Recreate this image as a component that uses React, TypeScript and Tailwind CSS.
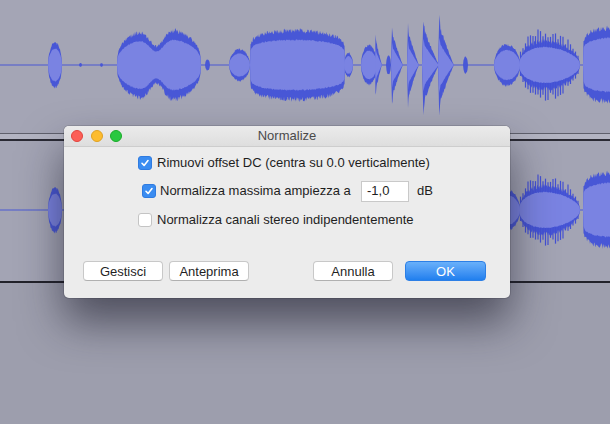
import React from "react";

type Kind = "blob" | "twin" | "rect" | "spike" | "spiky";

type Seg = {
  x0: number;
  x1: number;
  amp: number;
  kind: Kind;
};

// one channel; the second track repeats it (stereo)
const segments: Seg[] = [
  { x0: 79, x1: 82, amp: 2, kind: "blob" },
  { x0: 100, x1: 103, amp: 2, kind: "blob" },
  { x0: 48, x1: 62, amp: 24, kind: "blob" },
  { x0: 117, x1: 201, amp: 40, kind: "twin" },
  { x0: 205, x1: 210, amp: 6, kind: "blob" },
  { x0: 229, x1: 250, amp: 17, kind: "blob" },
  { x0: 250, x1: 345, amp: 38, kind: "rect" },
  { x0: 344, x1: 353, amp: 13, kind: "blob" },
  { x0: 361, x1: 377, amp: 21, kind: "blob" },
  { x0: 375, x1: 382, amp: 36, kind: "spike" },
  { x0: 386, x1: 391, amp: 10, kind: "blob" },
  { x0: 391, x1: 403, amp: 44, kind: "spike" },
  { x0: 407, x1: 419, amp: 46, kind: "spike" },
  { x0: 422, x1: 439, amp: 52, kind: "spike" },
  { x0: 438, x1: 454, amp: 54, kind: "spike" },
  { x0: 463, x1: 468, amp: 9, kind: "blob" },
  { x0: 494, x1: 520, amp: 22, kind: "blob" },
  { x0: 519, x1: 580, amp: 43, kind: "spiky" },
  { x0: 583, x1: 650, amp: 41, kind: "rect" },
];

const rnd = (i: number) => {
  const s = Math.sin(i * 12.9898 + 78.233) * 43758.5453;
  return s - Math.floor(s);
};

const envelope = (kind: Kind, t: number) => {
  const s = Math.max(0, Math.sin(Math.PI * t));
  switch (kind) {
    case "blob":
      return Math.pow(s, 0.5);
    case "twin":
      return (
        Math.pow(s, 0.35) *
        (1 - 0.5 * Math.exp(-Math.pow((t - 0.47) / 0.12, 2)))
      );
    case "rect":
      return Math.pow(s, 0.14) * (1 - 0.06 * t);
    case "spike":
      if (t < 0.08) return t / 0.08;
      if (t < 0.16) return 1 - ((t - 0.08) / 0.08) * 0.3;
      return 0.7 * Math.pow((1 - t) / 0.84, 1.1);
    case "spiky":
      return Math.pow(s, 0.45) * (1 - 0.3 * t);
  }
};

const buildPath = (seg: Seg, scale: number, jit: number, seed: number) => {
  const top: string[] = [];
  const bot: string[] = [];
  const step = 0.5;
  for (let x = seg.x0; x <= seg.x1 + 0.001; x += step) {
    const t = (x - seg.x0) / (seg.x1 - seg.x0);
    const a = seg.amp * envelope(seg.kind, t) * scale;
    const up = a * (1 - jit + jit * rnd(x * 7 + seed));
    const dn = a * (1 - jit + jit * rnd(x * 11 + seed + 3));
    top.push(`${x.toFixed(1)} ${(-up).toFixed(1)}`);
    bot.unshift(`${x.toFixed(1)} ${dn.toFixed(1)}`);
  }
  return `M ${seg.x0} 0 L ${top.join(" L ")} L ${bot.join(" L ")} Z`;
};

// vertical bursts for the "spiky" passage
const spikeLines = (seg: Seg) => {
  const out: { x: number; up: number; dn: number }[] = [];
  for (let x = seg.x0 + 1.5; x < seg.x1; x += 2.5) {
    const t = (x - seg.x0) / (seg.x1 - seg.x0);
    const a = seg.amp * envelope(seg.kind, t);
    out.push({ x, up: a * (0.72 + 0.28 * rnd(x * 3)), dn: a * (0.72 + 0.28 * rnd(x * 5 + 1)) });
  }
  return out;
};

const Waveform = ({ viewBox, height }: { viewBox: string; height: number }) => (
  <svg width={610} height={height} viewBox={viewBox} className="block">
    <line x1={0} y1={0} x2={610} y2={0} stroke="#4a58d4" strokeWidth={1.2} />
    {segments.map((seg, i) =>
      seg.kind === "spiky" ? (
        <g key={`o${i}`}>
          <path d={buildPath(seg, 0.72, 0.2, i * 31)} fill="#4857d6" />
          {spikeLines(seg).map((l) => (
            <line key={l.x} x1={l.x} y1={-l.up} x2={l.x} y2={l.dn} stroke="#4350d4" strokeWidth={1.2} />
          ))}
        </g>
      ) : (
        <path key={`o${i}`} d={buildPath(seg, 1, 0.14, i * 31)} fill="#4857d6" />
      )
    )}
    {segments.map((seg, i) =>
      seg.amp > 12 ? (
        <path
          key={`i${i}`}
          d={buildPath(
            seg,
            seg.kind === "spike" ? 0.55 : seg.kind === "spiky" ? 0.5 : 0.7,
            0.06,
            i * 17
          )}
          fill="#7a83e2"
        />
      ) : null
    )}
  </svg>
);

const Check = ({ checked }: { checked: boolean }) =>
  checked ? (
    <span className="w-[14px] h-[14px] rounded-[3px] bg-[#3a8cf1] border border-[#2f7be0] flex items-center justify-center shrink-0">
      <svg width="10" height="10" viewBox="0 0 10 10">
        <path d="M2 5.3 L4.1 7.4 L8 2.6" stroke="#fff" strokeWidth="1.6" fill="none" strokeLinecap="round" strokeLinejoin="round" />
      </svg>
    </span>
  ) : (
    <span className="w-[14px] h-[14px] rounded-[3px] bg-white border border-[#c4c4c4] shrink-0" />
  );

const Button = ({ label, primary }: { label: string; primary?: boolean }) =>
  primary ? (
    <button className="w-[81px] h-[20px] rounded-[4px] bg-gradient-to-b from-[#69b0fa] to-[#1f7fee] border border-[#2c7fe6] text-white text-[13px] leading-none flex items-center justify-center">
      {label}
    </button>
  ) : (
    <button className="w-[80px] h-[20px] rounded-[4px] bg-white border border-[#c8c8c8] border-b-[#b0b0b0] text-[#1f1f1f] text-[13px] leading-none flex items-center justify-center">
      {label}
    </button>
  );

export default function App() {
  return (
    <div
      className="relative w-[610px] h-[424px] overflow-hidden bg-[#9d9ead]"
      style={{ fontFamily: '"Liberation Sans", Arial, sans-serif' }}
    >
      {/* tracks */}
      <div className="h-[133px] bg-[#a4a5b5] overflow-hidden">
        <Waveform viewBox="0 -65 610 133" height={133} />
      </div>
      <div className="h-[1px] bg-[#5f606c]" />
      <div className="h-[5px] bg-[#b3b4c2]" />
      <div className="h-[2px] bg-[#2a2a34]" />
      <div className="h-[140px] bg-[#a3a4b4] overflow-hidden">
        <Waveform viewBox="0 -69 610 140" height={140} />
      </div>
      <div className="h-[2px] bg-[#22222a]" />

      {/* dialog */}
      <div className="absolute left-[64px] top-[126px] w-[446px] h-[172px] rounded-[5px] bg-[#ececec] overflow-hidden shadow-[0_24px_44px_rgba(25,25,40,0.6),0_0_0_1px_rgba(0,0,0,0.12)]">
        <div className="relative h-[21px] bg-gradient-to-b from-[#ebebeb] to-[#dedede] border-b border-[#cdcdcd] flex items-center">
          <div className="flex items-center gap-[7.5px] pl-[7px]">
            <span className="w-[12px] h-[12px] rounded-full bg-[#fc5f57] border border-[#e0443e]" />
            <span className="w-[12px] h-[12px] rounded-full bg-[#fdbc2e] border border-[#dea123]" />
            <span className="w-[12px] h-[12px] rounded-full bg-[#29c840] border border-[#1aab29]" />
          </div>
          <div className="absolute inset-0 flex items-center justify-center text-[13px] text-[#4a4a4a]">
            Normalize
          </div>
        </div>

        <div className="flex flex-col text-[13px] text-[#1e1e1e]">
          <div className="h-[20px] mt-[6px] pl-[74px] flex items-center gap-[5px]">
            <Check checked />
            <span>Rimuovi offset DC (centra su 0.0 verticalmente)</span>
          </div>
          <div className="h-[22px] mt-[7px] pl-[78px] flex items-center">
            <div className="w-[219px] flex items-center gap-[4px]">
              <Check checked />
              <span>Normalizza massima ampiezza a</span>
            </div>
            <div className="w-[48px] h-[21px] bg-white border border-[#c9c9c9] flex items-center pl-[5px]">
              -1,0
            </div>
            <span className="ml-[8px]">dB</span>
          </div>
          <div className="h-[20px] mt-[8px] pl-[74px] flex items-center gap-[5px]">
            <Check checked={false} />
            <span>Normalizza canali stereo indipendentemente</span>
          </div>
          <div className="mt-[31px] pl-[19px] pr-[24px] flex items-center">
            <div className="flex gap-[6px]">
              <Button label="Gestisci" />
              <Button label="Anteprima" />
            </div>
            <div className="ml-auto flex gap-[12px]">
              <Button label="Annulla" />
              <Button label="OK" primary />
            </div>
          </div>
        </div>
      </div>
    </div>
  );
}
